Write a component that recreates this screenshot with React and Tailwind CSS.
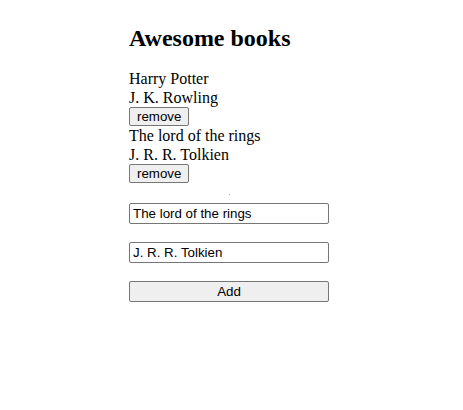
import React, { useState } from 'react';

const initialBooks = [
  { id: 1, title: 'Harry Potter', author: 'J. K. Rowling' },
  { id: 2, title: 'The lord of the rings', author: 'J. R. R. Tolkien' },
];

export default function App() {
  const [books, setBooks] = useState(initialBooks);
  const [title, setTitle] = useState('The lord of the rings');
  const [author, setAuthor] = useState('J. R. R. Tolkien');

  const removeBook = (id) => setBooks(books.filter((b) => b.id !== id));
  const addBook = () => {
    setBooks([...books, { id: Date.now(), title, author }]);
  };

  return (
    <div className="min-h-screen bg-white text-black font-['Liberation_Serif',serif]">
      <div className="w-[205px] mx-auto pt-[24px]">
        <h1 className="text-[24px] font-bold leading-[28px]">Awesome books</h1>

        {/* Book list */}
        <ul className="mt-[17px] text-[16px] leading-[19px]">
          {books.map((book) => (
            <li key={book.id} className="flex flex-col items-start">
              <span>{book.title}</span>
              <span>{book.author}</span>
              <button
                onClick={() => removeBook(book.id)}
                className="h-[19px] px-[7px] border border-[#767676] rounded-[2px] bg-[#efefef] text-[13.33px] leading-[15px] font-['Liberation_Sans',sans-serif] text-black"
              >
                remove
              </button>
            </li>
          ))}
        </ul>

        <div className="flex justify-center w-[200px] mt-[11px] h-[9px] items-start">
          <span className="block w-[1px] h-[1px] bg-[#aaaaaa]" />
        </div>

        {/* Add form */}
        <form
          className="flex flex-col gap-[18px] font-['Liberation_Sans',sans-serif] text-[13.33px]"
          onSubmit={(e) => {
            e.preventDefault();
            addBook();
          }}
        >
          <input
            value={title}
            onChange={(e) => setTitle(e.target.value)}
            className="w-[200px] h-[21px] px-[3px] border border-[#767676] rounded-[2px] text-black outline-none"
          />
          <input
            value={author}
            onChange={(e) => setAuthor(e.target.value)}
            className="w-[200px] h-[21px] px-[3px] border border-[#767676] rounded-[2px] text-black outline-none"
          />
          <button
            type="submit"
            className="w-[200px] h-[21px] border border-[#767676] rounded-[2px] bg-[#efefef] text-black"
          >
            Add
          </button>
        </form>
      </div>
    </div>
  );
}
